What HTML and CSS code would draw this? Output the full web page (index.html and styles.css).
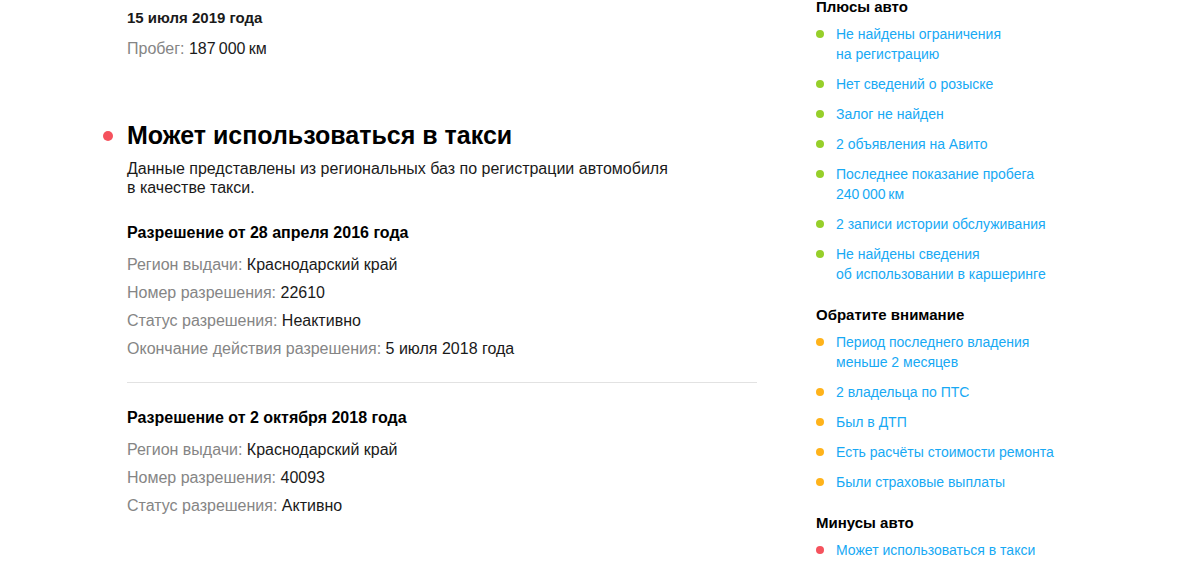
FILE: index.html
```html
<!DOCTYPE html>
<html lang="ru">
<head>
  <meta charset="UTF-8">
  <meta name="viewport" content="width=device-width, initial-scale=1.0">
  <title>Отчёт по автомобилю</title>
  <link rel="stylesheet" href="styles.css">
</head>

<body>
  <div class="report">
    <div class="main">
      <!-- пробег на дату -->
      <div class="mileage_date">15 июля 2019 года</div>
      <div class="row"><span class="label">Пробег:</span> 187&thinsp;000&thinsp;км</div>

      <!-- такси -->
      <div class="block">
        <h2 class="block_title"><span class="dot dot_red"></span>Может использоваться в такси</h2>
        <p class="block_text">Данные представлены из региональных баз по регистрации автомобиля<br>в качестве такси.</p>

        <div class="permit">
          <div class="permit_title">Разрешение от 28 апреля 2016 года</div>
          <div class="row"><span class="label">Регион выдачи:</span> Краснодарский край</div>
          <div class="row"><span class="label">Номер разрешения:</span> 22610</div>
          <div class="row"><span class="label">Статус разрешения:</span> Неактивно</div>
          <div class="row"><span class="label">Окончание действия разрешения:</span> 5 июля 2018 года</div>
        </div>

        <div class="permit">
          <div class="permit_title">Разрешение от 2 октября 2018 года</div>
          <div class="row"><span class="label">Регион выдачи:</span> Краснодарский край</div>
          <div class="row"><span class="label">Номер разрешения:</span> 40093</div>
          <div class="row"><span class="label">Статус разрешения:</span> Активно</div>
        </div>
      </div>
    </div>

    <div class="side">
      <div class="side_title">Плюсы авто</div>
      <ul class="side_list">
        <li><span class="dot dot_green"></span><a href="#">Не найдены ограничения<br>на регистрацию</a></li>
        <li><span class="dot dot_green"></span><a href="#">Нет сведений о розыске</a></li>
        <li><span class="dot dot_green"></span><a href="#">Залог не найден</a></li>
        <li><span class="dot dot_green"></span><a href="#">2 объявления на Авито</a></li>
        <li><span class="dot dot_green"></span><a href="#">Последнее показание пробега<br>240&thinsp;000&thinsp;км</a></li>
        <li><span class="dot dot_green"></span><a href="#">2 записи истории обслуживания</a></li>
        <li><span class="dot dot_green"></span><a href="#">Не найдены сведения<br>об использовании в каршеринге</a></li>
      </ul>

      <div class="side_title">Обратите внимание</div>
      <ul class="side_list">
        <li><span class="dot dot_orange"></span><a href="#">Период последнего владения<br>меньше 2 месяцев</a></li>
        <li><span class="dot dot_orange"></span><a href="#">2 владельца по ПТС</a></li>
        <li><span class="dot dot_orange"></span><a href="#">Был в ДТП</a></li>
        <li><span class="dot dot_orange"></span><a href="#">Есть расчёты стоимости ремонта</a></li>
        <li><span class="dot dot_orange"></span><a href="#">Были страховые выплаты</a></li>
      </ul>

      <div class="side_title">Минусы авто</div>
      <ul class="side_list">
        <li><span class="dot dot_red"></span><a href="#">Может использоваться в такси</a></li>
      </ul>
    </div>
  </div>
</body>

</html>
```

FILE: styles.css
```css
* {
  box-sizing: border-box;
}

body {
  margin: 0;
  background-color: #ffffff;
  color: #1a1a1a;
  font-family: 'Liberation Sans', Arial, sans-serif;
  font-size: 15px;
  line-height: 20px;
  overflow: hidden;
}

.report {
  display: flex;
  align-items: flex-start;
  gap: 59px;
  padding-left: 127px;
}

/* левая колонка */
.main {
  width: 630px;
  padding-top: 8px;
  font-size: 16px;
}

.mileage_date {
  font-size: 15px;
  font-weight: bold;
}

.row {
  line-height: 28px;
}

.mileage_date + .row {
  margin-top: 7px;
}

.label {
  color: #858585;
}

.block {
  margin-top: 56px;
}

.block_title {
  display: flex;
  align-items: center;
  margin: 0 0 0 -24px;
  font-size: 25px;
  line-height: 32px;
  font-weight: bold;
  color: #000000;
}

.block_title .dot {
  width: 10px;
  height: 10px;
  margin: 2px 14px 0 0;
}

.block_text {
  margin: 8px 0 0;
  line-height: 19px;
}

.permit {
  padding: 26px 0 19px;
}

.permit + .permit {
  padding-top: 25px;
  border-top: 1px solid #e2e2e2;
}

.permit_title {
  font-weight: bold;
  color: #000000;
  margin-bottom: 8px;
}

/* правая колонка */
.side {
  width: 270px;
  margin-top: -3px;
}

.side_title {
  font-weight: bold;
  color: #000000;
  margin-top: 21px;
}

.side_title:first-child {
  margin-top: 0;
}

.side_list {
  list-style: none;
  margin: 7px 0 0;
  padding: 0;
  display: flex;
  flex-direction: column;
  gap: 10px;
  font-size: 14px;
}

.side_list li {
  display: flex;
  align-items: flex-start;
}

.side_list a {
  color: #17a9f4;
  text-decoration: none;
}

.side_list .dot {
  width: 8px;
  height: 8px;
  margin: 6px 12px 0 0;
}

.dot {
  display: inline-block;
  flex: none;
  border-radius: 50%;
}

.dot_red {
  background-color: #f5525d;
}

.dot_green {
  background-color: #96cf2a;
}

.dot_orange {
  background-color: #ffb31a;
}
```
